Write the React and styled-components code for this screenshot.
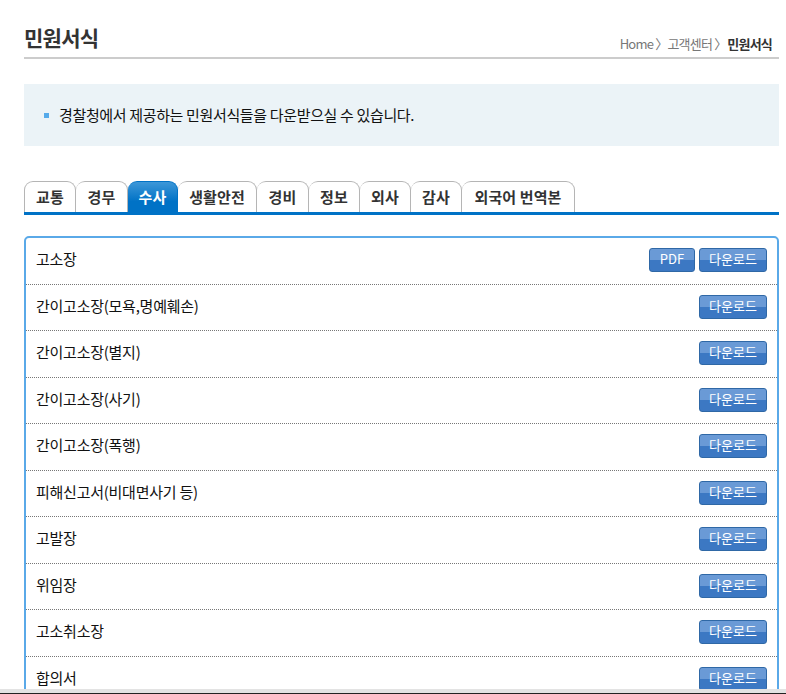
import React from "react";
import styled, { createGlobalStyle } from "styled-components";

const Global = createGlobalStyle`
  html, body {
    margin: 0;
    padding: 0;
    height: 100%;
    overflow: hidden;
    background: #fff;
  }
  body {
    font-family: "Noto Sans CJK KR", "Noto Sans", sans-serif;
    color: #111;
  }
`;

const Page = styled.div`
  width: 755px;
  padding: 0 7px 0 24px;
`;

const TitleBar = styled.div`
  display: flex;
  justify-content: space-between;
  align-items: flex-end;
  height: 57px;
  border-bottom: 2px solid #ccc;
  box-sizing: content-box;
`;

const Title = styled.h1`
  margin: 0 0 6px;
  font-size: 21px;
  line-height: 28px;
  font-weight: 700;
  letter-spacing: -0.7px;
  color: #333;
`;

const Crumbs = styled.div`
  display: flex;
  gap: 1px;
  margin: 0 7px 4px 0;
  font-size: 13px;
  line-height: 18px;
  letter-spacing: -0.8px;
  color: #777;

  strong {
    color: #333;
    font-weight: 700;
  }
`;

const Notice = styled.div`
  display: flex;
  align-items: center;
  gap: 10px;
  height: 62px;
  margin-top: 25px;
  padding-left: 20px;
  background: #ebf3f7;
  font-size: 15px;
  letter-spacing: -0.35px;
  color: #111;
`;

const Bullet = styled.span`
  width: 5px;
  height: 5px;
  background: #55aaea;
`;

const NoticeText = styled.span`
  padding-bottom: 2px;
`;

const Tabs = styled.div`
  display: flex;
  height: 31px;
  margin-top: 35px;
  border-bottom: 3px solid #0072c6;
`;

const Tab = styled.div`
  display: flex;
  align-items: center;
  justify-content: center;
  box-sizing: border-box;
  width: ${(p) => p.$w}px;
  height: 31px;
  padding-bottom: 2px;
  border: 1px solid #b5b5b5;
  border-bottom: 0;
  border-left-width: ${(p) => (p.$first ? 1 : 0)}px;
  border-radius: 9px 9px 0 0;
  background: #fff;
  font-size: 15px;
  font-weight: 700;
  letter-spacing: 0.1px;
  color: #333;

  ${(p) =>
    p.$active &&
    `
    border-color: #0072c6;
    background: linear-gradient(#3d97d8, #0072c6 65%);
    color: #fff;
  `}
`;

const Panel = styled.div`
  margin-top: 21px;
  border: 2px solid #5aa9e8;
  border-radius: 5px;
`;

const Row = styled.div`
  display: flex;
  align-items: center;
  justify-content: space-between;
  box-sizing: border-box;
  height: 46.5px;
  padding: 0 10px 1.5px;
  border-bottom: 1px dotted #777;
  font-size: 15px;
  letter-spacing: -0.25px;
  color: #111;
`;

const Label = styled.span`
  padding-bottom: 3px;
`;

const Actions = styled.div`
  display: flex;
  gap: 4px;
`;

const Button = styled.button`
  box-sizing: border-box;
  width: ${(p) => p.$w}px;
  height: 24px;
  padding: 0 0 2px;
  border: 1px solid #2f68a6;
  border-radius: 3px;
  background: linear-gradient(#6a9ad6 0 50%, #3c78c3 50% 100%);
  font-family: inherit;
  font-size: 13px;
  line-height: 20px;
  letter-spacing: 0;
  color: #fff;
`;

const BottomEdge = styled.div`
  position: fixed;
  left: 0;
  right: 0;
  bottom: 0;
  height: 5px;
  background: #e3e3e3;
  border-bottom: 1px solid #222;
  box-sizing: border-box;
`;

const tabs = [
  ["교통", 52],
  ["경무", 52],
  ["수사", 50],
  ["생활안전", 79],
  ["경비", 52],
  ["정보", 51],
  ["외사", 51],
  ["감사", 51],
  ["외국어 번역본", 113],
];

const forms = [
  "고소장",
  "간이고소장(모욕,명예훼손)",
  "간이고소장(별지)",
  "간이고소장(사기)",
  "간이고소장(폭행)",
  "피해신고서(비대면사기 등)",
  "고발장",
  "위임장",
  "고소취소장",
  "합의서",
];

export default function App() {
  return (
    <Page>
      <Global />
      <TitleBar>
        <Title>민원서식</Title>
        <Crumbs>
          <span>Home 〉고객센터 〉</span>
          <strong>민원서식</strong>
        </Crumbs>
      </TitleBar>
      <Notice>
        <Bullet />
        <NoticeText>경찰청에서 제공하는 민원서식들을 다운받으실 수 있습니다.</NoticeText>
      </Notice>
      <Tabs>
        {tabs.map(([name, w], i) => (
          <Tab key={name} $w={w} $first={i === 0} $active={name === "수사"}>
            {name}
          </Tab>
        ))}
      </Tabs>
      <Panel>
        {forms.map((name, i) => (
          <Row key={name}>
            <Label>{name}</Label>
            <Actions>
              {i === 0 && <Button $w={46}>PDF</Button>}
              <Button $w={68}>다운로드</Button>
            </Actions>
          </Row>
        ))}
      </Panel>
      <BottomEdge />
    </Page>
  );
}
